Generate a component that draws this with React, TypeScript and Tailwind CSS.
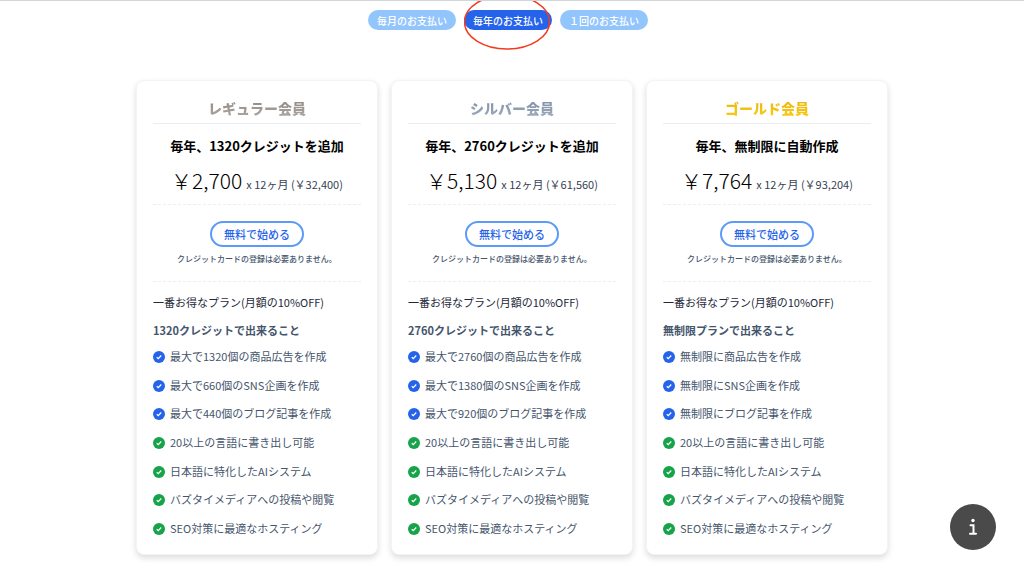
import { useState } from "react";
import clsx from "clsx";

interface Plan {
  name: string;
  color: string;
  summary: string;
  price: string;
  total: string;
  heading: string;
  credits: string[];
}

const tabs = ["毎月のお支払い", "毎年のお支払い", "１回のお支払い"];

const plans: Plan[] = [
  {
    name: "レギュラー会員",
    color: "from-[#8c8580] to-[#b0a9a4]",
    summary: "毎年、1320クレジットを追加",
    price: "￥2,700",
    total: "￥32,400",
    heading: "1320クレジットで出来ること",
    credits: [
      "最大で1320個の商品広告を作成",
      "最大で660個のSNS企画を作成",
      "最大で440個のブログ記事を作成",
    ],
  },
  {
    name: "シルバー会員",
    color: "from-[#7c8ba1] to-[#a0aec0]",
    summary: "毎年、2760クレジットを追加",
    price: "￥5,130",
    total: "￥61,560",
    heading: "2760クレジットで出来ること",
    credits: [
      "最大で2760個の商品広告を作成",
      "最大で1380個のSNS企画を作成",
      "最大で920個のブログ記事を作成",
    ],
  },
  {
    name: "ゴールド会員",
    color: "from-[#eab308] to-[#facc15]",
    summary: "毎年、無制限に自動作成",
    price: "￥7,764",
    total: "￥93,204",
    heading: "無制限プランで出来ること",
    credits: [
      "無制限に商品広告を作成",
      "無制限にSNS企画を作成",
      "無制限にブログ記事を作成",
    ],
  },
];

const common = [
  "20以上の言語に書き出し可能",
  "日本語に特化したAIシステム",
  "バズタイメディアへの投稿や閲覧",
  "SEO対策に最適なホスティング",
];

const Check = ({ className }: { className: string }) => (
  <svg viewBox="0 0 24 24" className={clsx("mt-[2px] h-3 w-3 shrink-0", className)} aria-hidden="true">
    <circle cx="12" cy="12" r="12" fill="currentColor" />
    <path d="M7.5 12.5l3 3 6-6.5" fill="none" stroke="white" strokeWidth="2.4" />
  </svg>
);

const PlanCard = ({ plan }: { plan: Plan }) => {
  return (
    <section className="rounded-lg border border-slate-100 bg-white px-4 pt-4 pb-3 shadow-[0_3px_6px_rgba(0,0,0,0.14)]">
      <div className="border-b border-[#e8eef2] pb-1 text-center">
        <h2
          className={clsx(
            "bg-gradient-to-b bg-clip-text text-[14px] leading-[22px] font-black text-transparent",
            plan.color
          )}
        >
          {plan.name}
        </h2>
      </div>
      {/* price */}
      <div className="border-b border-dashed border-[#eceef1] pt-3 pb-1 text-center">
        <p className="text-[13px] leading-5 font-bold text-black">{plan.summary}</p>
        <p className="mt-2 leading-8 font-light whitespace-nowrap text-black">
          <span className="text-[21px]">{plan.price}</span>
          <span className="ml-1 text-[11px] font-normal text-gray-700">x 12ヶ月 ({plan.total})</span>
        </p>
      </div>
      {/* sign up */}
      <div className="flex flex-col items-center border-b border-dashed border-[#eceef1] pt-4 pb-[14px]">
        <button
          type="button"
          className="h-[26px] rounded-full border-2 border-[#5b9af8] px-3 text-[11px] font-medium text-[#2563eb]"
        >
          無料で始める
        </button>
        <p className="mt-1 text-[8px] leading-4 font-medium whitespace-nowrap text-slate-600">
          クレジットカードの登録は必要ありません。
        </p>
      </div>
      <p className="pt-3 text-[11px] leading-4 text-gray-800">一番お得なプラン(月額の10%OFF)</p>
      <h3 className="mt-3 mb-1 text-[11px] leading-4 font-bold text-slate-600">{plan.heading}</h3>
      <ul className="grid min-h-[200px] auto-rows-fr text-[11px] leading-[18px] text-slate-600">
        {plan.credits.map((item) => (
          <li key={item} className="flex items-center gap-[5px]">
            <Check className="text-[#2563eb]" />
            {item}
          </li>
        ))}
        {common.map((item) => (
          <li key={item} className="flex items-center gap-[5px]">
            <Check className="text-[#16a34a]" />
            {item}
          </li>
        ))}
      </ul>
    </section>
  );
};

const App = () => {
  const [active, setActive] = useState(1);

  return (
    <main className="min-h-screen overflow-hidden border-t border-gray-300 bg-white font-['Noto_Sans_CJK_JP',sans-serif]">
      <div className="flex justify-center pt-[9px]">
        {tabs.map((tab, i) => (
          <button
            key={tab}
            type="button"
            onClick={() => setActive(i)}
            className={clsx(
              "relative mr-2 h-5 rounded-full px-[9px] text-[10px] font-medium text-white",
              i === active ? "bg-[#2563eb]" : "bg-[#93c5fd]"
            )}
          >
            {tab}
            {i === active && (
              <svg
                viewBox="0 0 88 56"
                className="pointer-events-none absolute -top-4 left-0 h-14 w-[88px]"
                aria-hidden="true"
              >
                <ellipse cx="43" cy="28" rx="42.5" ry="27" fill="none" stroke="#f43b1d" strokeWidth="1.5" />
              </svg>
            )}
          </button>
        ))}
      </div>
      <div className="mx-auto mt-[50px] grid max-w-[752px] grid-cols-3 gap-[13px]">
        {plans.map((plan) => (
          <PlanCard key={plan.name} plan={plan} />
        ))}
      </div>
      {/* info */}
      <button
        type="button"
        aria-label="情報"
        className="fixed right-7 bottom-7 flex h-[46px] w-[46px] items-center justify-center rounded-full bg-[#4a4a4a] text-white"
      >
        <svg viewBox="0 0 8 18" className="h-[18px] w-2" aria-hidden="true">
          <circle cx="4" cy="2.5" r="1.7" fill="currentColor" />
          <path d="M1.5 7.3h3v8M1 15.7h6" fill="none" stroke="currentColor" strokeWidth="2" strokeLinecap="round" />
        </svg>
      </button>
    </main>
  );
};

export default App;
